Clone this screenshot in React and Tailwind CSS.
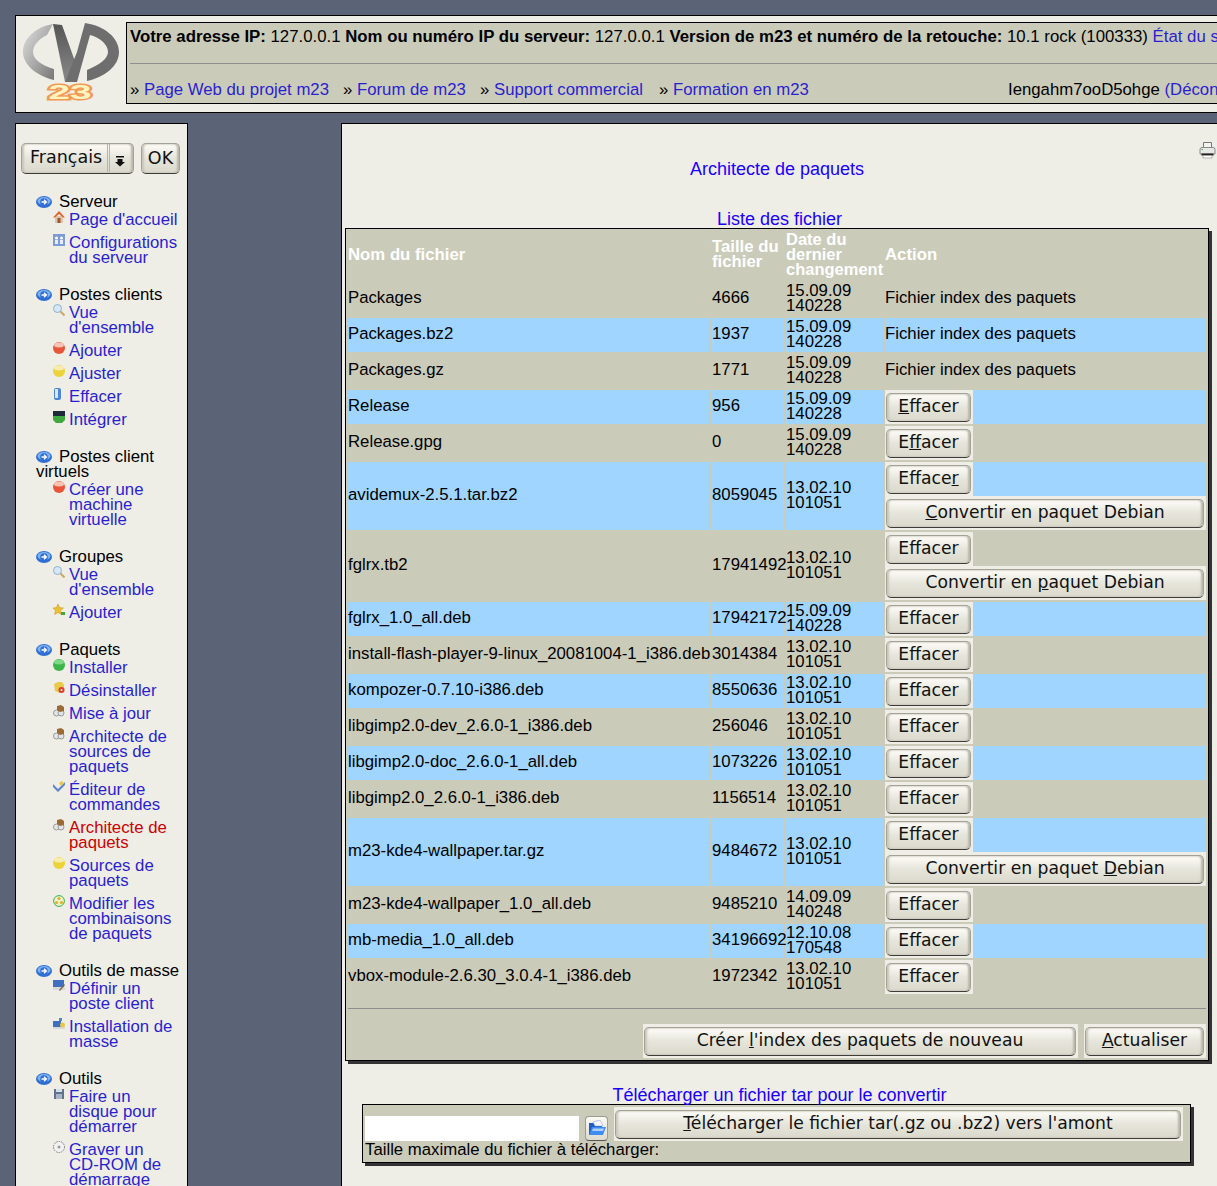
import React from 'react';

const sans = { fontFamily: '"Liberation Sans", Arial, sans-serif' };

const navSections = [
  { title: 'Serveur', items: [
    ['home', "Page d'accueil"],
    ['config', 'Configurations du serveur'],
  ] },
  { title: 'Postes clients', items: [
    ['search', "Vue d'ensemble"],
    ['red', 'Ajouter'],
    ['yellow', 'Ajuster'],
    ['can', 'Effacer'],
    ['plug', 'Intégrer'],
  ] },
  { title: 'Postes client virtuels', items: [
    ['red', 'Créer une machine virtuelle'],
  ] },
  { title: 'Groupes', items: [
    ['search', "Vue d'ensemble"],
    ['star', 'Ajouter'],
  ] },
  { title: 'Paquets', items: [
    ['green', 'Installer'],
    ['remove', 'Désinstaller'],
    ['pkg', 'Mise à jour'],
    ['pkg', 'Architecte de sources de paquets'],
    ['edit', 'Éditeur de commandes'],
    ['pkg', 'Architecte de paquets', true],
    ['yellow', 'Sources de paquets'],
    ['combo', 'Modifier les combinaisons de paquets'],
  ] },
  { title: 'Outils de masse', items: [
    ['define', 'Définir un poste client'],
    ['mass', 'Installation de masse'],
  ] },
  { title: 'Outils', items: [
    ['disk', 'Faire un disque pour démarrer'],
    ['cd', <>Graver un <span className="whitespace-nowrap">CD-ROM</span> de démarrage</>],
  ] },
];

// u = index of the underlined letter in the Effacer button, c = same for Convertir
const files = [
  { name: 'Packages', size: '4666', d: '15.09.09', t: '140228', index: true },
  { name: 'Packages.bz2', size: '1937', d: '15.09.09', t: '140228', index: true },
  { name: 'Packages.gz', size: '1771', d: '15.09.09', t: '140228', index: true },
  { name: 'Release', size: '956', d: '15.09.09', t: '140228', u: 0 },
  { name: 'Release.gpg', size: '0', d: '15.09.09', t: '140228', u: 1 },
  { name: 'avidemux-2.5.1.tar.bz2', size: '8059045', d: '13.02.10', t: '101051', u: 6, c: 0 },
  { name: 'fglrx.tb2', size: '17941492', d: '13.02.10', t: '101051', c: 13 },
  { name: 'fglrx_1.0_all.deb', size: '17942172', d: '15.09.09', t: '140228' },
  { name: 'install-flash-player-9-linux_20081004-1_i386.deb', size: '3014384', d: '13.02.10', t: '101051' },
  { name: 'kompozer-0.7.10-i386.deb', size: '8550636', d: '13.02.10', t: '101051' },
  { name: 'libgimp2.0-dev_2.6.0-1_i386.deb', size: '256046', d: '13.02.10', t: '101051' },
  { name: 'libgimp2.0-doc_2.6.0-1_all.deb', size: '1073226', d: '13.02.10', t: '101051' },
  { name: 'libgimp2.0_2.6.0-1_i386.deb', size: '1156514', d: '13.02.10', t: '101051' },
  { name: 'm23-kde4-wallpaper.tar.gz', size: '9484672', d: '13.02.10', t: '101051', c: 20 },
  { name: 'm23-kde4-wallpaper_1.0_all.deb', size: '9485210', d: '14.09.09', t: '140248' },
  { name: 'mb-media_1.0_all.deb', size: '34196692', d: '12.10.08', t: '170548' },
  { name: 'vbox-module-2.6.30_3.0.4-1_i386.deb', size: '1972342', d: '13.02.10', t: '101051' },
];

const Arrow = () => (
  <svg width="16" height="12" viewBox="0 0 16 12" className="inline-block align-[-1px] mr-[7px]">
    <ellipse cx="8" cy="6" rx="8" ry="6" fill="#2f6fd4" />
    <ellipse cx="8" cy="5" rx="6.500" ry="4" fill="#7fb2f0" />
    <circle cx="8" cy="6" r="3.800" fill="#2f6fd4" />
    <path d="M5.500 6h4.500M8 3.800 10.300 6 8 8.200" fill="none" stroke="#fff" strokeWidth="1.400" />
  </svg>
);

const Ball = ({ c, top }) => (
  <>
    <ellipse cx="6" cy="6" rx="6" ry="6" fill={c} />
    <ellipse cx="6" cy="3" rx="5" ry="2.500" fill={top} />
  </>
);

const icons = {
  home: <><path d="M2 5h8v7H2z" fill="#d9c6ad" /><path d="M6 0 0 6.500h2L6 3l4 3.500h2z" fill="#e2602f" /><rect x="4.500" y="7" width="3" height="5" fill="#a5532c" /></>,
  config: <><rect x="0" y="0" width="12" height="12" fill="#7c9cd8" /><circle cx="3.500" cy="4" r="1.500" fill="#fff" /><circle cx="8.500" cy="4" r="1.500" fill="#fff" /><rect x="2" y="6" width="3" height="4" fill="#e8eef9" /><rect x="7" y="6" width="3" height="4" fill="#e8eef9" /></>,
  search: <><circle cx="4.500" cy="4.500" r="4" fill="#d6e8f8" stroke="#8fb0cf" /><path d="M7.500 7.500 11.500 11.500" stroke="#c9a86a" strokeWidth="2" /></>,
  red: <Ball c="#e8553a" top="#f5c4b2" />,
  yellow: <Ball c="#ecd33a" top="#f7ecb0" />,
  green: <Ball c="#3cb54a" top="#7ed887" />,
  can: <><rect x="1" y="0" width="7" height="12" rx="2" fill="#4d86d6" /><rect x="2" y="1" width="3" height="9" fill="#d7e6f8" /></>,
  plug: <><rect x="0" y="0" width="12" height="5" fill="#1d2a3a" /><path d="M0 5h12v4l-3 3H3L0 9z" fill="#3fa83f" /></>,
  star: <><path d="M5 0 6.600 3.600 10.500 4 7.600 6.600 8.400 10.500 5 8.500 1.600 10.500 2.400 6.600 0 4 3.400 3.600z" fill="#eac12f" stroke="#c98f1e" strokeWidth=".5" /><rect x="8" y="8" width="4" height="3" fill="#3fa83f" /></>,
  remove: <><path d="M1 2 5 0h4l2 3v5l-4 3-5-2z" fill="#e9c94a" /><circle cx="8.500" cy="8" r="3" fill="#e23b2e" /><circle cx="8.500" cy="8" r="1" fill="#fff" /></>,
  pkg: <><circle cx="3.500" cy="8" r="3" fill="#e6e6e6" stroke="#9a9a9a" /><circle cx="8" cy="8" r="3" fill="#dfe3ea" stroke="#9a9a9a" /><path d="M4 1 8 0l3 2v4L7 7 4 5z" fill="#9a6b35" /></>,
  edit: <><path d="M0 3 5 8l7-7v3L5 11 0 6z" fill="#5d86c9" /><path d="M6 2 9 0l2 2-3 3z" fill="#e7c64b" /></>,
  combo: <><circle cx="6" cy="6" r="5.400" fill="#f4f1cf" stroke="#34b34a" /><circle cx="6" cy="3.500" r="1.600" fill="#d9b32c" /><circle cx="3.500" cy="7.500" r="1.600" fill="#d9b32c" /><circle cx="8.500" cy="7.500" r="1.600" fill="#d9b32c" /></>,
  define: <><rect x="0" y="0" width="11" height="7" fill="#3f6fc0" /><rect x="0" y="7" width="12" height="3" fill="#d9d9d9" /><path d="M6 10 11 4l1 1-5 6z" fill="#7a6a4a" /></>,
  mass: <><rect x="0" y="3" width="8" height="6" fill="#3f6fc0" /><rect x="0" y="9" width="12" height="2" fill="#d9d9d9" /><path d="M6 0h3v3H6z" fill="#4d86d6" /><circle cx="9.500" cy="7" r="2.500" fill="#e7c64b" /></>,
  disk: <><rect x="1" y="1" width="10" height="10" fill="#5f7391" /><rect x="3" y="1" width="6" height="3" fill="#d8dde6" /><rect x="3" y="6" width="6" height="5" fill="#aab4c4" /></>,
  cd: <><circle cx="6" cy="6" r="5.500" fill="#f2f2f2" stroke="#777" strokeDasharray="1.500 1" /><circle cx="6" cy="6" r="1.500" fill="#999" /></>,
};

const NavIcon = ({ type }) => (
  <svg width="12" height="12" viewBox="0 0 12 12" className="shrink-0 mt-[-1px]">{icons[type]}</svg>
);

const Logo = () => (
  <svg width="100" height="82" viewBox="0 0 100 82" className="shrink-0">
    <defs>
      <linearGradient id="lg" x1="0" y1="0" x2="1" y2="1">
        <stop offset="0" stopColor="#e2e2e2" />
        <stop offset="1" stopColor="#777" />
      </linearGradient>
      <linearGradient id="lv" x1="0" y1="0" x2="0" y2="1">
        <stop offset="0" stopColor="#555" />
        <stop offset="1" stopColor="#8a8a8a" />
      </linearGradient>
    </defs>
    <path d="M30 2C12 5 0 17 0 30c0 13 14 24 31 28V47C18 43 10 37 10 30c0-7 6-13 14-17z" fill="url(#lg)" />
    <path d="M30 2l9 1 15 42v15H42z" fill="url(#lv)" />
    <path d="M62 1c20 3 34 15 34 29 0 14-14 25-32 29V48c12-5 21-11 21-18 0-8-9-15-18-17L54 60H42l12-30z" fill="#6e6e6e" />
    <text x="47" y="77" textAnchor="middle" fontSize="20" fontWeight="700" fontFamily="Liberation Sans" fill="#fff3c0" stroke="#f29a55" strokeWidth="3" paintOrder="stroke" textLength="43" lengthAdjust="spacingAndGlyphs">23</text>
  </svg>
);

const btnFace = 'rounded-[5px] border border-[#a3a297] border-b-[#3c3c38] bg-linear-to-b from-[#fdfcf8] via-[#e6e5db] to-[#dbd9cc] shadow-[inset_2px_0_2px_#c9c7b9,inset_-2px_0_2px_#b9b7a9] text-[#111]';

// button with one optional underlined letter, sits on a light square like the old KDE theme
const Btn = ({ label, u, className = '' }) => (
  <span className={`flex bg-[#eeede6] pt-[3px] pb-[2px] pl-[1px] pr-[2px] h-[34px] ${className}`}>
    <span
      className={`flex-1 flex items-center justify-center pb-[2px] whitespace-nowrap text-[17.2px] ${btnFace}`}
      style={{ fontFamily: '"DejaVu Sans", sans-serif' }}
    >
      {u === undefined ? label : (
        <span>
          {label.slice(0, u)}<span className="underline">{label[u]}</span>{label.slice(u + 1)}
        </span>
      )}
    </span>
  </span>
);

const Cell = ({ children, tall }) => (
  <td className={`p-0 align-middle whitespace-nowrap ${tall ? 'pb-[3px]' : 'pb-1'}`}>{children}</td>
);

const FileRow = ({ file, i }) => (
  <tr className={`h-[34px] ${i % 2 === 1 ? 'bg-[#9fd5ff]' : 'bg-[#cbcbb9]'}`}>
    <Cell>{file.name}</Cell>
    <Cell>{file.size}</Cell>
    <Cell tall>{file.d}<br />{file.t}</Cell>
    {file.index ? (
      <Cell>Fichier index des paquets</Cell>
    ) : (
      <td className="p-0 align-top">
        <Btn label="Effacer" u={file.u} className="w-[88px]" />
        {(file.c !== undefined) && <Btn label="Convertir en paquet Debian" u={file.c} />}
      </td>
    )}
  </tr>
);

const TopBar = () => (
  <header className="flex items-start gap-[3px] w-[1400px] h-[98px] bg-[#eeede6] border border-black pl-[7px] pt-[6px]">
    <Logo />
    <div className="w-[1300px] h-[82px] bg-[#cbcbb9] border border-black px-[3px] whitespace-nowrap">
      <div className="h-[26px] flex items-center text-[16.8px]">
        <b>Votre adresse IP:</b>&nbsp;127.0.0.1&nbsp;<b>Nom ou numéro IP du serveur:</b>&nbsp;127.0.0.1&nbsp;<b>Version de m23 et numéro de la retouche:</b>&nbsp;10.1 rock (100333)&nbsp;<a className="text-[#2a1fd0]">État du serveur</a>
      </div>
      <hr className="mt-[14px] border-t border-[#8f8f8f] w-[1290px]" />
      <div className="flex h-[15px] mt-[18px] items-center">
        <span className="w-[213px]">» <a className="text-[#2a1fd0]">Page Web du projet m23</a></span>
        <span className="w-[137px]">» <a className="text-[#2a1fd0]">Forum de m23</a></span>
        <span className="w-[179px]">» <a className="text-[#2a1fd0]">Support commercial</a></span>
        <span className="w-[349px]">» <a className="text-[#2a1fd0]">Formation en m23</a></span>
        <span>Iengahm7ooD5ohge <a className="text-[#2a1fd0]">(Déconnexion)</a></span>
      </div>
    </div>
  </header>
);

const Sidebar = () => (
  <aside className="w-[173px] h-[1100px] shrink-0 bg-[#eeede6] border border-black pl-[20px] pt-[19px]">
    <div className="flex gap-[7px] ml-[-15px] text-[17.5px]" style={{ fontFamily: '"DejaVu Sans", sans-serif' }}>
      <div className={`flex items-center w-[113px] h-[31px] pl-[8px] pb-[2px] ${btnFace}`}>
        <span className="w-[77px]">Français</span>
        <span className="w-[3px] h-[28px] border-x border-[#b5b4aa]" />
        <svg width="12" height="12" viewBox="0 0 12 12" className="ml-[4px] mt-[6px]">
          <path d="M2 1h8v1.500H2zM3.500 4h5v3H11L6 11.500 1 7h2.500z" fill="#111" />
        </svg>
      </div>
      <div className={`flex items-center justify-center w-[39px] h-[31px] pb-[1px] ${btnFace}`}>OK</div>
    </div>
    <nav className="mt-[20px]">
      {navSections.map((section) => (
        <section key={section.title} className="mb-[22px]">
          <div className="text-black w-[150px]"><Arrow />{section.title}</div>
          <ul className="mt-[3px] ml-[17px] flex flex-col gap-[8px]">
            {section.items.map(([icon, label, active], i) => (
              <li key={i} className="flex gap-[4px]">
                <NavIcon type={icon} />
                <a className={`w-[113px] ${active ? 'text-[#cc0000]' : 'text-[#2a1fd0]'}`}>{label}</a>
              </li>
            ))}
          </ul>
        </section>
      ))}
    </nav>
  </aside>
);

const Content = () => (
  <main className="relative w-[1000px] h-[1100px] shrink-0 bg-[#eeede6] border border-black pl-[3px]">
    <svg width="17" height="17" viewBox="0 0 17 17" className="absolute left-[857px] top-[18px]">
      <path d="M4.500.5h8v6h-8z" fill="#f2f2ee" stroke="#777" />
      <path d="M1 7.500q0-2 2-2h11q2 0 2 2V12H1z" fill="#e8e8e4" stroke="#8a8a8a" />
      <path d="M2.500 11.500h12v2h-12z" fill="#222" />
      <path d="M4 13.500h9v2.500H4z" fill="#fff" stroke="#888" strokeWidth=".6" />
      <rect x="2.500" y="7" width="1.500" height="1" fill="#4caf50" />
    </svg>
    <h1 className="w-[864px] mt-[36px] text-center text-[18px] leading-[18px] font-normal text-[#1a00ff]">Architecte de paquets</h1>
    <h2 className="w-[864px] mt-[32px] pl-[5px] text-center text-[18px] leading-[18px] font-normal text-[#1a00ff]">Liste des fichier</h2>
    <table className="table-fixed w-[864px] border-separate border-spacing-[2px] border border-black bg-[#cbcbb9] shadow-[3px_3px_0_#333]">
      <colgroup>
        <col className="w-[362px]" />
        <col className="w-[72px]" />
        <col className="w-[97px]" />
        <col className="w-[321px]" />
      </colgroup>
      <thead>
        <tr className="h-[49px] text-white font-bold text-left">
          <th className="p-0 pb-[2px] align-middle">Nom du fichier</th>
          <th className="p-0 pb-1 align-middle">Taille du fichier</th>
          <th className="p-0 pb-[3px] align-middle text-[16.5px] font-bold">Date du dernier changement</th>
          <th className="p-0 pb-[2px] align-middle">Action</th>
        </tr>
      </thead>
      <tbody>
        {files.map((file, i) => <FileRow key={file.name} file={file} i={i} />)}
        <tr>
          <td colSpan={4} className="p-0">
            <hr className="mt-[12px] mb-[15px] border-t border-[#8f8f8f]" />
            <div className="flex justify-end gap-[6px]">
              <Btn label="Créer l'index des paquets de nouveau" u={6} className="w-[435px]" />
              <Btn label="Actualiser" u={0} className="w-[122px]" />
            </div>
          </td>
        </tr>
      </tbody>
    </table>
    <h2 className="w-[869px] mt-[25px] text-center text-[18px] leading-[18px] font-normal text-[#1a00ff]">Télécharger un fichier tar pour le convertir</h2>
    <form className="ml-[17px] w-[829px] h-[59px] bg-[#cbcbb9] border border-black shadow-[3px_3px_0_#333] pl-[2px] pt-[2px]">
      <div className="flex items-end">
        <input className="w-[214px] h-[25px] bg-white" aria-label="Fichier" />
        <span className="ml-[6px] w-[23px] h-[25px] rounded-[4px] border border-[#9c9b90] border-b-[#555] bg-linear-to-b from-[#fbfaf6] to-[#dddbcf] flex items-center justify-center">
          <svg width="19" height="17" viewBox="0 0 19 17">
            <path d="M2 3h5l1.500 2H15v10H2z" fill="#1f5fc4" />
            <path d="M6 2 13 0l3 6H8z" fill="#f5f8fc" stroke="#7fa3d8" strokeWidth=".5" />
            <path d="M2 15 5 7h14l-3 8z" fill="#3f8df0" />
            <path d="M6 8.500h11l-1 2.500H5z" fill="#a9d0fa" />
          </svg>
        </span>
        <Btn label="Télécharger le fichier tar(.gz ou .bz2) vers l'amont" u={0} className="ml-[6px] w-[569px]" />
      </div>
      <p className="mt-[1px]">Taille maximale du fichier à télécharger:</p>
    </form>
  </main>
);

const App = () => (
  <div className="w-[1217px] h-[1186px] overflow-hidden bg-[#5a6476] text-[16.75px] leading-[15px] text-black pl-[15px] pt-[15px]" style={sans}>
    <TopBar />
    <div className="flex gap-[153px] mt-[10px]">
      <Sidebar />
      <Content />
    </div>
  </div>
);

export default App;
